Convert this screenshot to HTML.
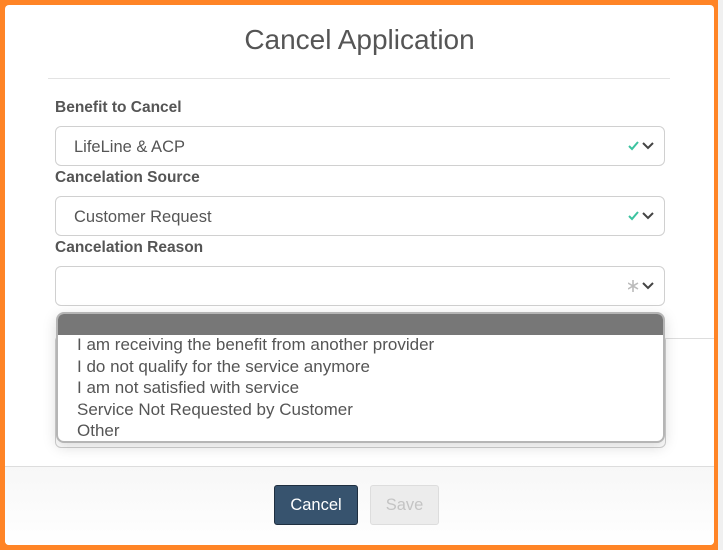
<!DOCTYPE html>
<html><head><style>
body{margin:0;width:723px;height:550px;overflow:hidden;background:#f0f0f0;font-family:"Liberation Sans",Arial,sans-serif;position:relative}
.frame{position:absolute;left:0;top:0;width:718px;height:550px;background:#ff8426}
.modal{position:absolute;left:5px;top:5px;width:709px;height:540px;background:#fff;border-radius:4px;overflow:hidden}
.title{position:absolute;left:0;width:709px;top:19px;text-align:center;font-size:28px;color:#555}
.hr{position:absolute;left:43px;top:73px;width:622px;height:1px;background:#e3e3e3}
.lbl{position:absolute;left:50px;font-size:15.5px;font-weight:bold;color:#555}
.inp{position:absolute;left:50px;height:38px;border:1px solid #d0d0d0;border-radius:6px;font-size:16.5px;color:#555;line-height:40px;padding-left:18px;width:590px}
.ic{position:absolute;right:8px;top:13px}
.foot{position:absolute;left:0;top:461px;width:709px;height:79px;background:linear-gradient(#f7f7f7,#fff);border-top:1px solid #ddd}
.btn{position:absolute;top:480px;height:38px;font-size:16.5px;border-radius:3px;text-align:center;line-height:38px}
.dd{position:absolute;left:51px;top:307px;width:605px;height:127px;border:2px solid #b5b5b5;border-radius:8px;background:#fff;overflow:hidden;box-shadow:0 4px 14px rgba(0,0,0,.15)}
.dd .hd{height:21px;background:#777}
.dd div.o{padding-left:19px;font-size:17px;color:#555;height:21.5px;line-height:20px}
</style></head><body>
<div class="frame"></div>
<div class="modal">
<div class="title">Cancel Application</div>
<div class="hr"></div>
<div class="lbl" style="top:94px">Benefit to Cancel</div>
<div class="inp" style="top:121px">LifeLine &amp; ACP<svg class="ic" width="28" height="12" viewBox="0 0 28 12"><path d="M1 6l3 3 6-7" stroke="#3cc3a0" stroke-width="2" fill="none"/><path d="M15 3l5 5 5-5" stroke="#444" stroke-width="2" fill="none"/></svg></div>
<div class="lbl" style="top:164px">Cancelation Source</div>
<div class="inp" style="top:191px">Customer Request<svg class="ic" width="28" height="12" viewBox="0 0 28 12"><path d="M1 6l3 3 6-7" stroke="#3cc3a0" stroke-width="2" fill="none"/><path d="M15 3l5 5 5-5" stroke="#444" stroke-width="2" fill="none"/></svg></div>
<div class="lbl" style="top:234px">Cancelation Reason</div>
<div class="inp" style="top:261px">&nbsp;<svg class="ic" width="28" height="12" viewBox="0 0 28 12"><path d="M5 0v12M0 3l10 6M0 9l10-6" stroke="#bbb" stroke-width="1.6" fill="none"/><path d="M15 3l5 5 5-5" stroke="#444" stroke-width="2" fill="none"/></svg></div>
<div style="position:absolute;left:50px;top:330px;width:609px;height:111px;border:1px solid #d0d0d0;border-radius:6px"></div>
<div style="position:absolute;left:659px;top:333px;width:50px;height:1px;background:#ddd"></div>
<div class="dd"><div class="hd"></div>
<div class="o">I am receiving the benefit from another provider</div>
<div class="o">I do not qualify for the service anymore</div>
<div class="o">I am not satisfied with service</div>
<div class="o">Service Not Requested by Customer</div>
<div class="o">Other</div>
</div>
<div class="foot"></div>
<div class="btn" style="left:269px;width:82px;background:#37536e;color:#fff;border:1px solid #1f2f40">Cancel</div>
<div class="btn" style="left:365px;width:67px;background:#ececec;color:#c4c4c4;border:1px solid #ddd">Save</div>
</div>
</body></html>
